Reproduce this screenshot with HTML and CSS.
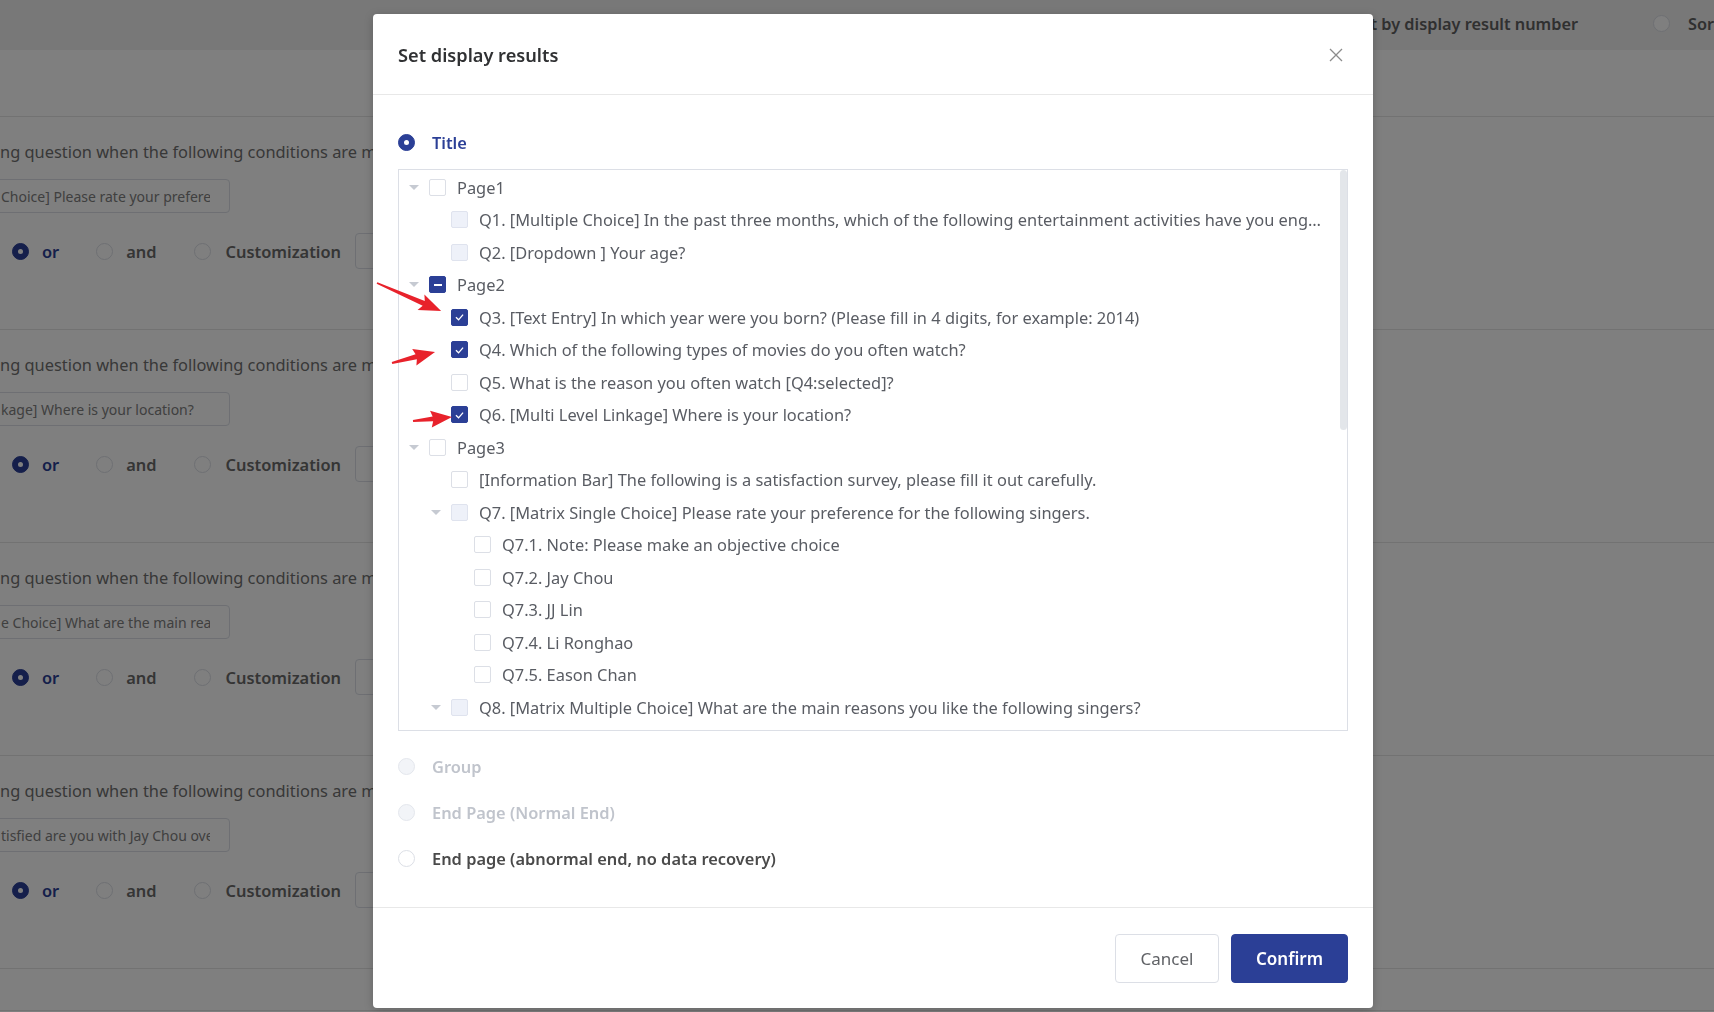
FILE: index.html
```html
<!DOCTYPE html>
<html>
<head>
<meta charset="utf-8">
<link rel="stylesheet" href="styles.css">
</head>
<body>
<div class="page">
  <div class="topbar">
    <span class="sort-label">Sort by display result number</span>
    <span class="bg-radio"></span>
    <span class="sort-label sort-cut">Sort by question number</span>
  </div>
  <div class="subbar"></div>

  <div class="section">
    <div class="cond-text">ng question when the following conditions are met</div>
    <div class="cond-input"><span>Choice] Please rate your preference for the following singers</span></div>
    <div class="logic">
      <span class="opt"><span class="bg-radio on"></span><span class="opt-text blue">or</span></span>
      <span class="opt"><span class="bg-radio"></span><span class="opt-text">and</span></span>
      <span class="opt"><span class="bg-radio"></span><span class="opt-text">Customization</span></span>
      <span class="custom-input"></span>
    </div>
  </div>
  <div class="section">
    <div class="cond-text">ng question when the following conditions are met</div>
    <div class="cond-input"><span>kage] Where is your location?</span></div>
    <div class="logic">
      <span class="opt"><span class="bg-radio on"></span><span class="opt-text blue">or</span></span>
      <span class="opt"><span class="bg-radio"></span><span class="opt-text">and</span></span>
      <span class="opt"><span class="bg-radio"></span><span class="opt-text">Customization</span></span>
      <span class="custom-input"></span>
    </div>
  </div>
  <div class="section">
    <div class="cond-text">ng question when the following conditions are met</div>
    <div class="cond-input"><span>e Choice] What are the main reasons you like</span></div>
    <div class="logic">
      <span class="opt"><span class="bg-radio on"></span><span class="opt-text blue">or</span></span>
      <span class="opt"><span class="bg-radio"></span><span class="opt-text">and</span></span>
      <span class="opt"><span class="bg-radio"></span><span class="opt-text">Customization</span></span>
      <span class="custom-input"></span>
    </div>
  </div>
  <div class="section">
    <div class="cond-text">ng question when the following conditions are met</div>
    <div class="cond-input"><span>tisfied are you with Jay Chou overall?</span></div>
    <div class="logic">
      <span class="opt"><span class="bg-radio on"></span><span class="opt-text blue">or</span></span>
      <span class="opt"><span class="bg-radio"></span><span class="opt-text">and</span></span>
      <span class="opt"><span class="bg-radio"></span><span class="opt-text">Customization</span></span>
      <span class="custom-input"></span>
    </div>
  </div>
  <div class="section last"></div>
</div>

<div class="mask"></div>

<div class="dialog">
  <div class="dlg-head">
    <div class="dlg-title">Set display results</div>
    <svg class="dlg-close" width="14" height="14" viewBox="0 0 14 14"><path d="M1 1L13 13M13 1L1 13" stroke="#8c8c8c" stroke-width="1.3" fill="none"/></svg>
  </div>
  <div class="dlg-body">
    <div class="choice">
      <span class="radio checked"></span><span class="choice-label active">Title</span>
    </div>
    <div class="tree">
      <div class="node l0"><i class="caret"></i><span class="cb"></span><span class="label">Page1</span></div>
      <div class="node l1"><i class="caret none"></i><span class="cb dis"></span><span class="label">Q1. [Multiple Choice] In the past three months, which of the following entertainment activities have you engaged in?</span></div>
      <div class="node l1"><i class="caret none"></i><span class="cb dis"></span><span class="label">Q2. [Dropdown ] Your age?</span></div>
      <div class="node l0"><i class="caret"></i><span class="cb ind"><i class="dash"></i></span><span class="label">Page2</span></div>
      <div class="node l1"><i class="caret none"></i><span class="cb on"><svg viewBox="0 0 16 16" width="16" height="16"><path d="M4.2 8.3L7 11L11.8 5.4" stroke="#fff" stroke-width="1.4" fill="none"/></svg></span><span class="label">Q3. [Text Entry] In which year were you born? (Please fill in 4 digits, for example: 2014)</span></div>
      <div class="node l1"><i class="caret none"></i><span class="cb on"><svg viewBox="0 0 16 16" width="16" height="16"><path d="M4.2 8.3L7 11L11.8 5.4" stroke="#fff" stroke-width="1.4" fill="none"/></svg></span><span class="label">Q4. Which of the following types of movies do you often watch?</span></div>
      <div class="node l1"><i class="caret none"></i><span class="cb"></span><span class="label">Q5. What is the reason you often watch [Q4:selected]?</span></div>
      <div class="node l1"><i class="caret none"></i><span class="cb on"><svg viewBox="0 0 16 16" width="16" height="16"><path d="M4.2 8.3L7 11L11.8 5.4" stroke="#fff" stroke-width="1.4" fill="none"/></svg></span><span class="label">Q6. [Multi Level Linkage] Where is your location?</span></div>
      <div class="node l0"><i class="caret"></i><span class="cb"></span><span class="label">Page3</span></div>
      <div class="node l1"><i class="caret none"></i><span class="cb"></span><span class="label">[Information Bar] The following is a satisfaction survey, please fill it out carefully.</span></div>
      <div class="node l1"><i class="caret"></i><span class="cb dis"></span><span class="label">Q7. [Matrix Single Choice] Please rate your preference for the following singers.</span></div>
      <div class="node l2"><i class="caret none"></i><span class="cb"></span><span class="label">Q7.1. Note: Please make an objective choice</span></div>
      <div class="node l2"><i class="caret none"></i><span class="cb"></span><span class="label">Q7.2. Jay Chou</span></div>
      <div class="node l2"><i class="caret none"></i><span class="cb"></span><span class="label">Q7.3. JJ Lin</span></div>
      <div class="node l2"><i class="caret none"></i><span class="cb"></span><span class="label">Q7.4. Li Ronghao</span></div>
      <div class="node l2"><i class="caret none"></i><span class="cb"></span><span class="label">Q7.5. Eason Chan</span></div>
      <div class="node l1"><i class="caret"></i><span class="cb dis"></span><span class="label">Q8. [Matrix Multiple Choice] What are the main reasons you like the following singers?</span></div>
      <div class="node l2"><i class="caret none"></i><span class="cb"></span><span class="label">Q8.1. Jay Chou</span></div>
      <div class="node l2"><i class="caret none"></i><span class="cb"></span><span class="label">Q8.2. JJ Lin</span></div>
      <div class="scroll-thumb"></div>
    </div>
    <div class="choice after-tree">
      <span class="radio disabled"></span><span class="choice-label muted">Group</span>
    </div>
    <div class="choice">
      <span class="radio disabled"></span><span class="choice-label muted">End Page (Normal End)</span>
    </div>
    <div class="choice">
      <span class="radio"></span><span class="choice-label">End page (abnormal end, no data recovery)</span>
    </div>
  </div>
  <div class="dlg-foot">
    <button class="btn">Cancel</button>
    <button class="btn primary">Confirm</button>
  </div>
</div>

<svg class="arrows" width="1714" height="1012" viewBox="0 0 1714 1012">
  <g fill="#e8222b">
    <polygon transform="translate(377 283) rotate(23.6)" points="0,-0.9 51,-2.6 48,-8.5 70,0 48,8.5 51,2.6 0,0.9"/>
    <polygon transform="translate(392 363) rotate(-14.3)" points="0,-1.1 25,-2.6 23,-8.5 44.4,0 23,8.5 25,2.6 0,1.1"/>
    <polygon transform="translate(413 421) rotate(-5.9)" points="0,-1.1 20,-2.4 18,-8.5 39.2,0 18,8.5 20,2.4 0,1.1"/>
  </g>
</svg>
</body>
</html>
```

FILE: styles.css
```css
* { box-sizing: border-box; margin: 0; padding: 0; }
html, body { width: 1714px; height: 1012px; overflow: hidden; }
body {
  font-family: "Noto Sans", "Liberation Sans", sans-serif;
  background: #fff;
  color: #333;
  position: relative;
}

/* background page */
.page { width: 1714px; }
.topbar {
  height: 50px;
  background: #f0f0f0;
  display: flex;
  align-items: center;
  justify-content: flex-end;
  padding-bottom: 3px;
}
.sort-label { font-size: 16.3px; font-weight: 600; color: #606060; white-space: nowrap; }
.topbar .bg-radio { margin-left: 75px; margin-right: 18px; }
.sort-cut { width: 26px; overflow: hidden; flex: none; }
.subbar { height: 66px; }
.section {
  border-top: 1px solid #e4e4e4;
  height: 213px;
  padding-top: 23px;
}
.section.last { height: 43px; border-bottom: 1px solid #e4e4e4; }
.cond-text { font-size: 16.4px; line-height: 24px; color: #707070; white-space: nowrap; }
.cond-input {
  margin-top: 15px;
  margin-left: -20px;
  width: 250px;
  height: 34px;
  border: 1px solid #dcdfe6;
  border-radius: 4px;
  padding: 0 19px 0 20px;
  display: flex;
  align-items: center;
  font-size: 14px;
  color: #808080;
}
.cond-input span { white-space: nowrap; overflow: hidden; }
.logic {
  margin-top: 20px;
  height: 36px;
  display: flex;
  align-items: center;
  padding-left: 12px;
}
.opt { display: flex; align-items: center; margin-right: 37px; }
.opt:nth-child(3) { margin-right: 14px; }
.opt-text { margin-left: 13px; font-size: 16.4px; font-weight: 600; color: #6a6a6a; }
.opt:nth-child(3) .opt-text { margin-left: 15px; }
.opt-text.blue { color: #2b3f96; }
.bg-radio {
  width: 17px; height: 17px; border-radius: 50%;
  border: 1px solid #dcdfe6; background: #fff; flex: none;
}
.bg-radio.on { background: #2b3f96; border-color: #2b3f96; position: relative; }
.bg-radio.on::after {
  content: ""; position: absolute; left: 5px; top: 5px;
  width: 5px; height: 5px; border-radius: 50%; background: #fff;
}
.custom-input {
  width: 200px; height: 36px;
  border: 1px solid #dcdfe6; border-radius: 4px;
}

/* mask */
.mask { position: fixed; left: 0; top: 0; right: 0; bottom: 0; background: rgba(0,0,0,0.5); }

/* dialog */
.dialog {
  position: absolute;
  left: 373px; top: 14px;
  width: 1000px; height: 994px;
  background: #fff;
  border-radius: 4px;
  box-shadow: 0 2px 10px rgba(0,0,0,0.2);
  display: flex;
  flex-direction: column;
}
.dlg-head {
  height: 81px;
  border-bottom: 1px solid #e8e8e8;
  display: flex;
  align-items: center;
  padding: 0 30px 0 25px;
  flex: none;
}
.dlg-title { flex: 1; font-size: 18.2px; font-weight: 600; color: #303133; padding-top: 2px; }
.dlg-close { display: block; margin-top: 2px; }
.dlg-body { padding: 24px 25px 25px; flex: none; }
.choice { height: 46px; display: flex; align-items: center; }
.choice.after-tree { margin-top: 12px; }
.radio {
  width: 17px; height: 17px; border-radius: 50%;
  border: 1px solid #dcdfe6; background: #fff; flex: none; position: relative;
}
.radio.checked { background: #2b3f96; border-color: #2b3f96; }
.radio.checked::after {
  content: ""; position: absolute; left: 5px; top: 5px;
  width: 5px; height: 5px; border-radius: 50%; background: #fff;
}
.radio.disabled { background: #f2f4f8; border-color: #e4e7ed; }
.choice-label { margin-left: 17px; font-size: 16.4px; font-weight: 600; color: #4a4a4a; }
.choice-label.active { color: #2b3f96; }
.choice-label.muted { color: #c0c4cc; }

.tree {
  position: relative;
  margin-top: 4px;
  height: 562px;
  border: 1px solid #dcdfe6;
  overflow: hidden;
  padding: 1px 22px 0 0;
}
.node {
  height: 32.5px;
  display: flex;
  align-items: center;
  padding-left: 6px;
}
.node.l1 { padding-left: 28px; }
.node.l2 { padding-left: 51px; }
.caret {
  width: 18px; height: 18px; flex: none;
  display: flex; align-items: center; justify-content: center;
}
.caret::before {
  content: "";
  border-left: 5px solid transparent;
  border-right: 5px solid transparent;
  border-top: 5px solid #c6cad2;
}
.caret.none::before { display: none; }
.cb {
  margin-left: 6px;
  width: 17px; height: 17px; flex: none;
  border: 1px solid #dcdfe6; border-radius: 2px; background: #fff;
  display: flex; align-items: center; justify-content: center;
}
.cb.dis { background: #eef1f9; border-color: #dfe3ee; }
.cb.on, .cb.ind { background: #2b3f96; border-color: #2b3f96; }
.cb svg { display: block; }
.cb .dash { width: 8px; height: 2px; background: #fff; }
.label {
  margin-left: 11px;
  font-size: 16.4px;
  color: #595c63;
  white-space: nowrap;
  overflow: hidden;
  text-overflow: ellipsis;
  min-width: 0;
}
.scroll-thumb {
  position: absolute; right: 0; top: 0;
  width: 7px; height: 260px;
  border-radius: 4px;
  background: #e3e6ea;
}

.dlg-foot {
  margin-top: auto;
  border-top: 1px solid #e8e8e8;
  height: 101px;
  display: flex;
  justify-content: flex-end;
  align-items: center;
  padding: 0 25px;
  gap: 12px;
}
.btn {
  height: 49px;
  border-radius: 4px;
  font-family: inherit;
  font-size: 17px;
  border: 1px solid #dcdfe6;
  background: #fff;
  color: #606266;
  width: 104px;
}
.btn.primary {
  width: 117px;
  background: #2b3f96;
  border-color: #2b3f96;
  color: #fff;
  font-weight: 600;
}

.arrows { position: absolute; left: 0; top: 0; pointer-events: none; }
```
